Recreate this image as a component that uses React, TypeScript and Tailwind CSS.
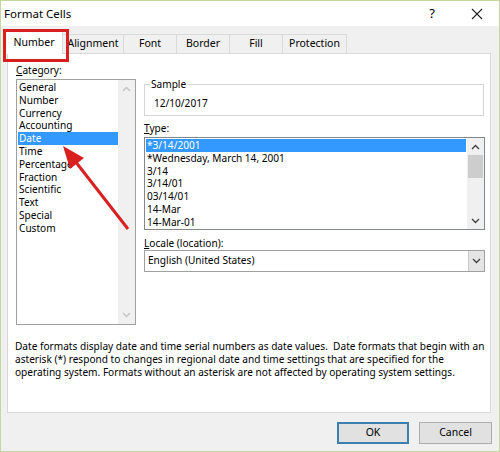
const categories = ['General', 'Number', 'Currency', 'Accounting', 'Date', 'Time', 'Percentage', 'Fraction', 'Scientific', 'Text', 'Special', 'Custom']
const types = ['*3/14/2001', '*Wednesday, March 14, 2001', '3/14', '3/14/01', '03/14/01', '14-Mar', '14-Mar-01']

const tabs = [
  { label: 'Alignment', w: 'w-[61px]' },
  { label: 'Font', w: 'w-[53px]' },
  { label: 'Border', w: 'w-[53px]' },
  { label: 'Fill', w: 'w-[53px]' },
  { label: 'Protection', w: 'w-[64px]' },
]

function Chevron({ up, color }: { up?: boolean; color: string }) {
  return (
    <svg width="9" height="6" viewBox="0 0 9 6">
      <path d={up ? 'M1 5 L4.5 1.5 L8 5' : 'M1 1 L4.5 4.5 L8 1'} fill="none" stroke={color} strokeWidth="1.3" />
    </svg>
  )
}

export default function App() {
  return (
    <div
      className="relative w-[500px] h-[452px] bg-[#f0f0f0] border border-[#c6d79d] flex flex-col text-black text-[10.1px] overflow-hidden"
      style={{ fontFamily: '"Noto Sans", "Open Sans", sans-serif' }}
    >
      {/* title bar */}
      <div className="h-[25px] bg-white flex items-center shrink-0">
        <span className="pl-[3px] text-[11.5px] flex-1">Format Cells</span>
        <span className="w-[30px] text-center text-[13px]">?</span>
        <span className="w-[44px] ml-[8px] flex justify-center">
          <svg width="12" height="12" viewBox="0 0 12 12">
            <path d="M1 1 L11 11 M11 1 L1 11" stroke="#222" strokeWidth="1.1" />
          </svg>
        </span>
      </div>

      {/* tabs */}
      <div className="h-[27px] flex items-end pl-[4px] shrink-0 text-[10.5px]">
        <div className="w-[58px] h-[24px] -mb-px z-10 bg-white border border-b-0 border-[#d9d9d9] flex items-center justify-center">
          Number
        </div>
        {tabs.map((t) => (
          <div
            key={t.label}
            className={`${t.w} h-[19px] bg-[#f0f0f0] border-t border-r border-[#d9d9d9] flex items-center justify-center`}
          >
            {t.label}
          </div>
        ))}
      </div>

      {/* panel */}
      <div className="ml-[6px] w-[484px] h-[360px] bg-white border border-[#d9d9d9] pl-[8px] pt-[9px] flex flex-col shrink-0">
        <div className="flex">
          {/* category column */}
          <div className="w-[120px] flex flex-col">
            <div className="h-[14px] leading-[14px]">
              <span className="underline">C</span>ategory:
            </div>
            <div className="mt-[2px] h-[246px] border border-[#a0a0a0] flex">
              <div className="flex-1 pl-[1px] pt-[1px]">
                {categories.map((c) => (
                  <div
                    key={c}
                    className={`h-[12.8px] leading-[12.8px] pl-[1px] ${c === 'Date' ? 'bg-[#3399ff] text-white' : ''}`}
                  >
                    {c}
                  </div>
                ))}
              </div>
              <div className="w-[17px] bg-[#f0f0f0] flex flex-col items-center justify-between py-[6px]">
                <Chevron up color="#c4c4c4" />
                <Chevron color="#c4c4c4" />
              </div>
            </div>
          </div>

          {/* right column */}
          <div className="ml-[8px] w-[341px] flex flex-col">
            <div className="relative mt-[21px] h-[32px] w-[340px] border border-[#d5d5d5] pl-[9px] pt-[11px]">
              <span className="absolute left-[5px] -top-[8px] bg-white px-[1px] leading-[14px]">Sample</span>
              <div className="leading-[14px]">12/10/2017</div>
            </div>
            <div className="mt-[5px] h-[14px] leading-[14px]">
              <span className="underline">T</span>ype:
            </div>
            <div className="mt-[2px] h-[93px] border border-[#828790] flex">
              <div className="flex-1 px-[1px] pt-[1px]">
                {types.map((t, i) => (
                  <div
                    key={t}
                    className={`h-[12.8px] leading-[12.8px] pl-[1px] ${i === 0 ? 'bg-[#3399ff] text-white' : ''}`}
                  >
                    {t}
                  </div>
                ))}
              </div>
              <div className="w-[17px] bg-[#f0f0f0] flex flex-col items-center">
                <div className="h-[17px] flex items-center justify-center">
                  <Chevron up color="#404040" />
                </div>
                <div className="w-[15px] h-[23px] bg-[#cdcdcd]" />
                <div className="flex-1" />
                <div className="h-[17px] flex items-center justify-center">
                  <Chevron color="#404040" />
                </div>
              </div>
            </div>
            <div className="mt-[6px] h-[14px] leading-[14px]">
              <span className="underline">L</span>ocale (location):
            </div>
            <div className="h-[22px] border border-[#a0a0a0] flex items-center">
              <span className="flex-1 pl-[3px]">English (United States)</span>
              <div className="w-[16px] h-full bg-[#e5e5e5] border-l border-[#c8c8c8] flex items-center justify-center">
                <Chevron color="#404040" />
              </div>
            </div>
          </div>
        </div>

        <div className="mt-[15px] -ml-px leading-[13px] whitespace-nowrap">
          <div>Date formats display date and time serial numbers as date values.&nbsp; Date formats that begin with an</div>
          <div>asterisk (*) respond to changes in regional date and time settings that are specified for the</div>
          <div>operating system. Formats without an asterisk are not affected by operating system settings.</div>
        </div>
      </div>

      {/* buttons */}
      <div className="mt-[9px] flex pl-[336px] gap-[10px] text-[10.5px]">
        <button className="w-[72px] h-[22px] bg-[#e1e1e1] border border-[#3c7fb1] outline outline-1 -outline-offset-2 outline-[#3c7fb1]">
          OK
        </button>
        <button className="w-[73px] h-[22px] bg-[#e1e1e1] border border-[#adadad]">Cancel</button>
      </div>

      {/* annotation: red box */}
      <div className="absolute left-[2px] top-[28px] w-[66px] h-[33px] border-[3px] border-[#d7201f] z-20" />

      {/* annotation: red arrow */}
      <svg className="absolute left-0 top-0 z-20" width="500" height="452" viewBox="0 0 500 452">
        <line x1="127" y1="228" x2="74" y2="160" stroke="#d7201f" strokeWidth="3" />
        <polygon points="62,145 83,157 69,168" fill="#d7201f" />
      </svg>
    </div>
  )
}
